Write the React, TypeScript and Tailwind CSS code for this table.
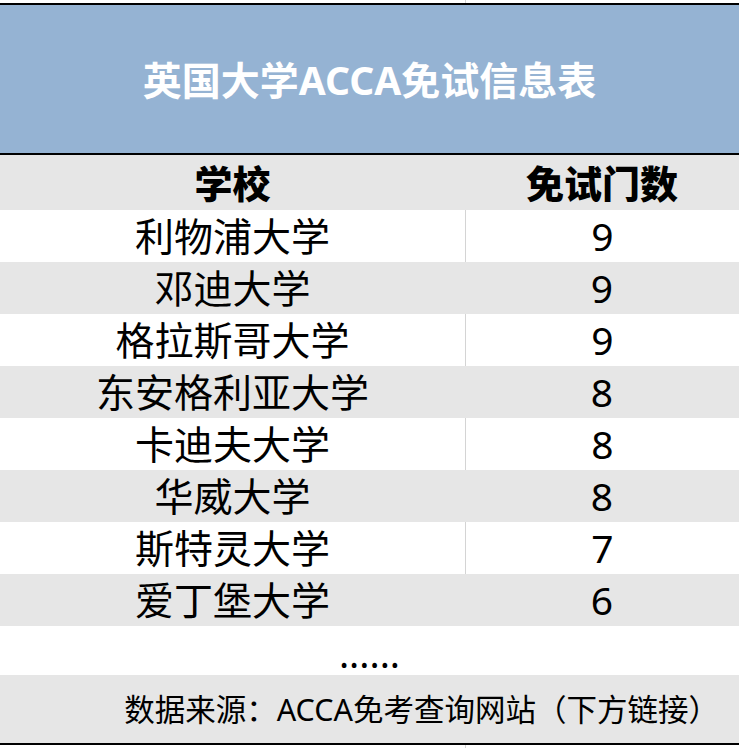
import React from "react";

const rows: [string, string][] = [
  ["利物浦大学", "9"],
  ["邓迪大学", "9"],
  ["格拉斯哥大学", "9"],
  ["东安格利亚大学", "8"],
  ["卡迪夫大学", "8"],
  ["华威大学", "8"],
  ["斯特灵大学", "7"],
  ["爱丁堡大学", "6"],
];

const font = { fontFamily: '"Noto Sans", "Noto Sans CJK SC", sans-serif' };

export default function App() {
  return (
    <div className="w-[739px] h-[748px] bg-white text-black overflow-hidden" style={font}>
      <div className="h-[3px] grid grid-cols-[465px_1fr]">
        <div />
        <div className="border-l border-[#d4d4d4]" />
      </div>
      <div className="h-[2px] bg-black" />
      <div className="h-[148px] bg-[#95b3d3] flex items-center justify-center">
        <span className="text-white font-bold text-[39px] leading-none">英国大学ACCA免试信息表</span>
      </div>
      <div className="h-[2px] bg-black" />
      <div className="h-[55px] bg-[#e6e6e6] grid grid-cols-[465px_1fr]">
        <div className="flex items-center justify-center font-black text-[38px] leading-none">学校</div>
        <div className="flex items-center justify-center font-black text-[38px] leading-none">免试门数</div>
      </div>
      {rows.map(([name, n], i) => {
        const gray = i % 2 === 1;
        return (
          <div
            key={name}
            className={
              gray
                ? "h-[52px] bg-[#e6e6e6] grid grid-cols-[465px_1fr]"
                : "h-[52px] bg-white grid grid-cols-[465px_1fr]"
            }
          >
            <div className="flex items-center justify-center text-[39px] leading-none pb-[2px]">{name}</div>
            <div
              className={
                gray
                  ? "flex items-center justify-center text-[39px] leading-none pb-[2px]"
                  : "flex items-center justify-center text-[39px] leading-none pb-[2px] border-l border-[#d4d4d4]"
              }
            >
              {n}
            </div>
          </div>
        );
      })}
      <div className="h-[49px] bg-white flex items-center justify-center">
        <span className="text-[38px] leading-none relative top-[2px]">......</span>
      </div>
      <div className="h-[68px] bg-[#e6e6e6] flex items-center justify-end pr-[20px]">
        <span className="text-[30.5px] leading-none">数据来源：ACCA免考查询网站（下方链接）</span>
      </div>
      <div className="h-[2px] bg-black" />
      <div className="h-[3px] grid grid-cols-[465px_1fr]">
        <div />
        <div className="border-l border-[#d4d4d4]" />
      </div>
    </div>
  );
}
